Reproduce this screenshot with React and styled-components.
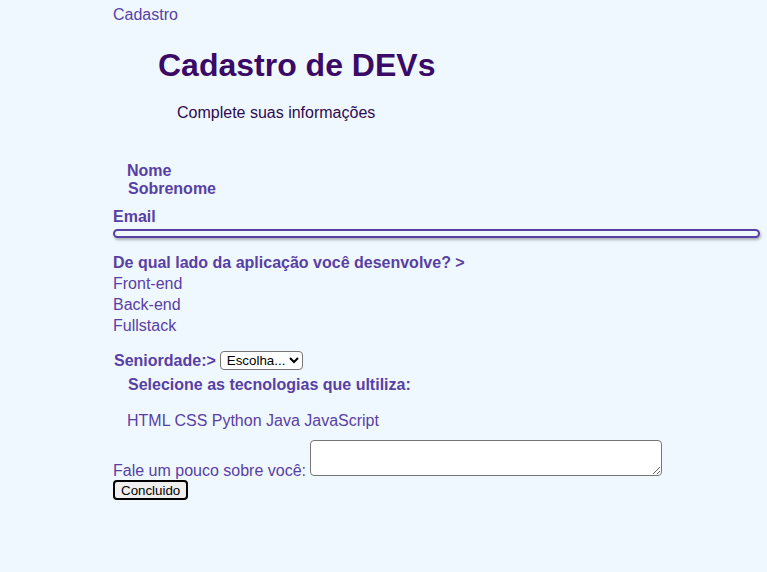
import styled, { createGlobalStyle } from "styled-components";

const GlobalStyle = createGlobalStyle`
  body {
    margin: 0;
    background-color: #f0f8ff;
    font-family: "Liberation Sans", Arial, sans-serif;
  }
`;

const colors = {
  label: "#583fa4",
  title: "#3a0a66",
  subtitle: "#2d0a50",
};

export default function App() {
  return (
    <>
      <GlobalStyle />
      <Page>
        <Brand>Cadastro</Brand>
        <Title>Cadastro de DEVs</Title>
        <Subtitle>Complete suas informações</Subtitle>
        <NameBlock>
          <Label $indent="14px">Nome</Label>
          <Label $indent="15px">Sobrenome</Label>
        </NameBlock>
        <Label $top="10px">Email</Label>
        <EmailInput type="email" />
        <Label $top="16px">De qual lado da aplicação você desenvolve? &gt;</Label>
        <OptionList>
          <Option>Front-end</Option>
          <Option>Back-end</Option>
          <Option>Fullstack</Option>
        </OptionList>
        <SelectRow>
          <Label $indent="1px">Seniordade:&gt;</Label>
          <Select defaultValue="">
            <option value="">Escolha...</option>
            <option value="junior">Júnior</option>
            <option value="pleno">Pleno</option>
            <option value="senior">Sênior</option>
          </Select>
        </SelectRow>
        <Label $indent="15px" $top="6px">
          Selecione as tecnologias que ultiliza:
        </Label>
        <TechList>HTML CSS Python Java JavaScript</TechList>
        <AboutRow>
          Fale um pouco sobre você: <About />
        </AboutRow>
        <Submit type="button">Concluido</Submit>
      </Page>
    </>
  );
}

const Page = styled.div`
  padding: 6px 0 40px 113px;
  font-size: 16px;
  line-height: 18px;
  color: ${colors.label};
`;

const Brand = styled.div`
  color: ${colors.label};
`;

const Title = styled.h1`
  margin: 23px 0 0 45px;
  font-size: 32px;
  line-height: 37px;
  font-weight: bold;
  color: ${colors.title};
`;

const Subtitle = styled.p`
  margin: 20px 0 0 64px;
  color: ${colors.subtitle};
`;

const NameBlock = styled.div`
  margin-top: 40px;
`;

const Label = styled.div`
  font-weight: bold;
  color: ${colors.label};
  margin-left: ${(p) => p.$indent || "0"};
  margin-top: ${(p) => p.$top || "0"};
`;

const EmailInput = styled.input`
  display: block;
  box-sizing: border-box;
  margin: 3px 0 0 0;
  width: 647px;
  height: 9px;
  padding: 0;
  border: 2px solid ${colors.label};
  border-radius: 5px;
  background: #f0f8ff;
  box-shadow: 1px 2px 3px rgba(0, 0, 0, 0.3);
  outline: none;
`;

const OptionList = styled.div`
  margin-top: 1px;
`;

const Option = styled.div`
  line-height: 21px;
  color: ${colors.label};
`;

const SelectRow = styled.div`
  display: flex;
  align-items: center;
  gap: 4px;
  margin-top: 15px;
  height: 19px;
`;

const Select = styled.select`
  box-sizing: border-box;
  width: 83px;
  height: 19px;
  padding: 0 0 0 2px;
  font-family: "Liberation Sans", Arial, sans-serif;
  font-size: 13.33px;
  color: #000;
  background: #fff;
  border: 1px solid #767676;
  border-radius: 4px;
`;

const TechList = styled.div`
  margin: 18px 0 0 14px;
  color: ${colors.label};
`;

const AboutRow = styled.div`
  margin-top: 10px;
  color: ${colors.label};
`;

const About = styled.textarea`
  box-sizing: border-box;
  width: 352px;
  height: 36px;
  margin: 0;
  vertical-align: baseline;
  background: #fff;
  border: 1px solid #767676;
  border-radius: 4px;
  font-family: "Liberation Sans", Arial, sans-serif;
`;

const Submit = styled.button`
  display: block;
  box-sizing: border-box;
  width: 75px;
  height: 20px;
  margin-top: 0;
  padding: 0 6px;
  font-family: "Liberation Sans", Arial, sans-serif;
  font-size: 13.33px;
  color: #000;
  background: #efefef;
  border: 2px solid #000;
  border-radius: 4px;
`;
